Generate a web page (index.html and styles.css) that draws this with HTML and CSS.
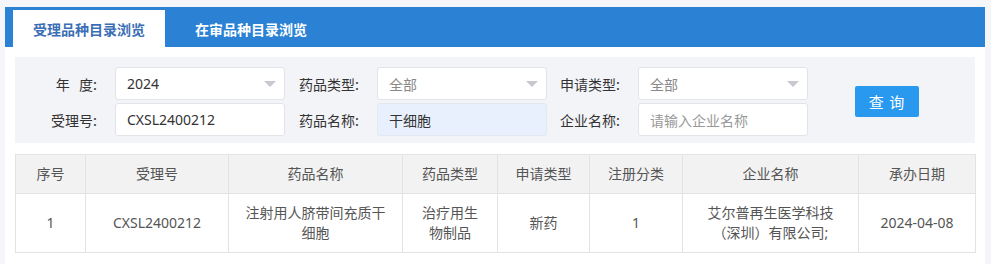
FILE: index.html
```html
<!DOCTYPE html>
<html lang="zh-CN">
<head>
<meta charset="utf-8">
<title>受理品种目录浏览</title>
<link rel="stylesheet" href="styles.css">
</head>
<body>
<div class="page">
  <div class="tabs">
    <div class="tab active">受理品种目录浏览</div>
    <div class="tab">在审品种目录浏览</div>
  </div>
  <div class="content">
    <div class="filters">
      <div class="fields">
        <label class="lbl lbl-first">年&nbsp;&nbsp;&nbsp;度:</label>
        <div class="select"><span>2024</span><span class="caret"></span></div>
        <label class="lbl">药品类型:</label>
        <div class="select"><span class="muted">全部</span><span class="caret"></span></div>
        <label class="lbl">申请类型:</label>
        <div class="select"><span class="muted">全部</span><span class="caret"></span></div>

        <label class="lbl lbl-first">受理号:</label>
        <div class="input"><span>CXSL2400212</span></div>
        <label class="lbl">药品名称:</label>
        <div class="input filled"><span>干细胞</span></div>
        <label class="lbl">企业名称:</label>
        <div class="input"><span class="placeholder">请输入企业名称</span></div>
      </div>
      <button class="btn">查 询</button>
    </div>

    <table class="grid">
      <colgroup>
        <col style="width:70px"><col style="width:143px"><col style="width:174px"><col style="width:95px">
        <col style="width:92px"><col style="width:93px"><col style="width:176px"><col style="width:117px">
      </colgroup>
      <thead>
        <tr>
          <th>序号</th><th>受理号</th><th>药品名称</th><th>药品类型</th>
          <th>申请类型</th><th>注册分类</th><th>企业名称</th><th>承办日期</th>
        </tr>
      </thead>
      <tbody>
        <tr>
          <td>1</td><td>CXSL2400212</td><td>注射用人脐带间充质干细胞</td><td>治疗用生物制品</td>
          <td>新药</td><td>1</td><td>艾尔普再生医学科技（深圳）有限公司;</td><td>2024-04-08</td>
        </tr>
      </tbody>
    </table>
  </div>
</div>
</body>
</html>
```

FILE: styles.css
```css
* { box-sizing: border-box; }

html, body {
  margin: 0;
  padding: 0;
}

body {
  background: #f5f6f9;
  font-family: "Noto Sans", "Noto Sans CJK SC", sans-serif;
  font-size: 14px;
  color: #333;
  padding: 7px 6px 0 5px;
  height: 264px;
  overflow: hidden;
}

.page {
  background: #fff;
  width: 980px;
  height: 257px;
}

.tabs {
  display: flex;
  align-items: flex-end;
  height: 40px;
  background: #2b82d4;
  padding-left: 8px;
}

.tab {
  width: 152px;
  height: 37px;
  display: flex;
  align-items: center;
  justify-content: center;
  color: #fff;
  font-size: 14px;
  font-weight: bold;
  font-family: "Noto Sans CJK SC", sans-serif;
}

.tab + .tab {
  margin-left: 10px;
}

.tab.active {
  background: #fff;
  color: #3a6fb5;
}

.content {
  padding: 10px 10px 0 10px;
}

.filters {
  background: #f3f4f8;
  padding: 10px 0 7px 10px;
  display: flex;
  align-items: center;
}

.fields {
  display: grid;
  grid-template-columns: 90px 170px 92px 170px 91px 170px;
  grid-auto-rows: 33px;
  row-gap: 3px;
}

.lbl {
  display: flex;
  align-items: center;
  justify-content: flex-end;
  padding-right: 18px;
  color: #333;
  font-family: "Noto Sans CJK SC", sans-serif;
  white-space: pre;
}

.select, .input {
  display: flex;
  align-items: center;
  justify-content: space-between;
  background: #fff;
  border: 1px solid #e2e4ea;
  border-radius: 3px;
  padding: 0 8px 0 11px;
  color: #333;
}

.input.filled {
  background: #e8f0fd;
  border-color: #e4e9f1;
}

.muted { color: #888; }
.placeholder { color: #999; }

.caret {
  width: 0;
  height: 0;
  border-left: 6px solid transparent;
  border-right: 6px solid transparent;
  border-top: 6px solid #c7c9ce;
}

.btn {
  margin-left: 47px;
  width: 64px;
  height: 31px;
  border: none;
  border-radius: 2px;
  background: #2999f0;
  color: #fff;
  font-size: 15px;
  font-family: "Noto Sans CJK SC", sans-serif;
  padding: 0;
  letter-spacing: 1px;
}

.grid {
  margin-top: 11px;
  width: 960px;
  border-collapse: collapse;
  table-layout: fixed;
  color: #555;
}

.grid th, .grid td {
  border: 1px solid #e3e3e3;
  text-align: center;
  padding: 0 15px;
  line-height: 20px;
  font-weight: normal;
}

.grid th {
  background: #f2f2f2;
  height: 39px;
}

.grid td {
  height: 59px;
}
```
